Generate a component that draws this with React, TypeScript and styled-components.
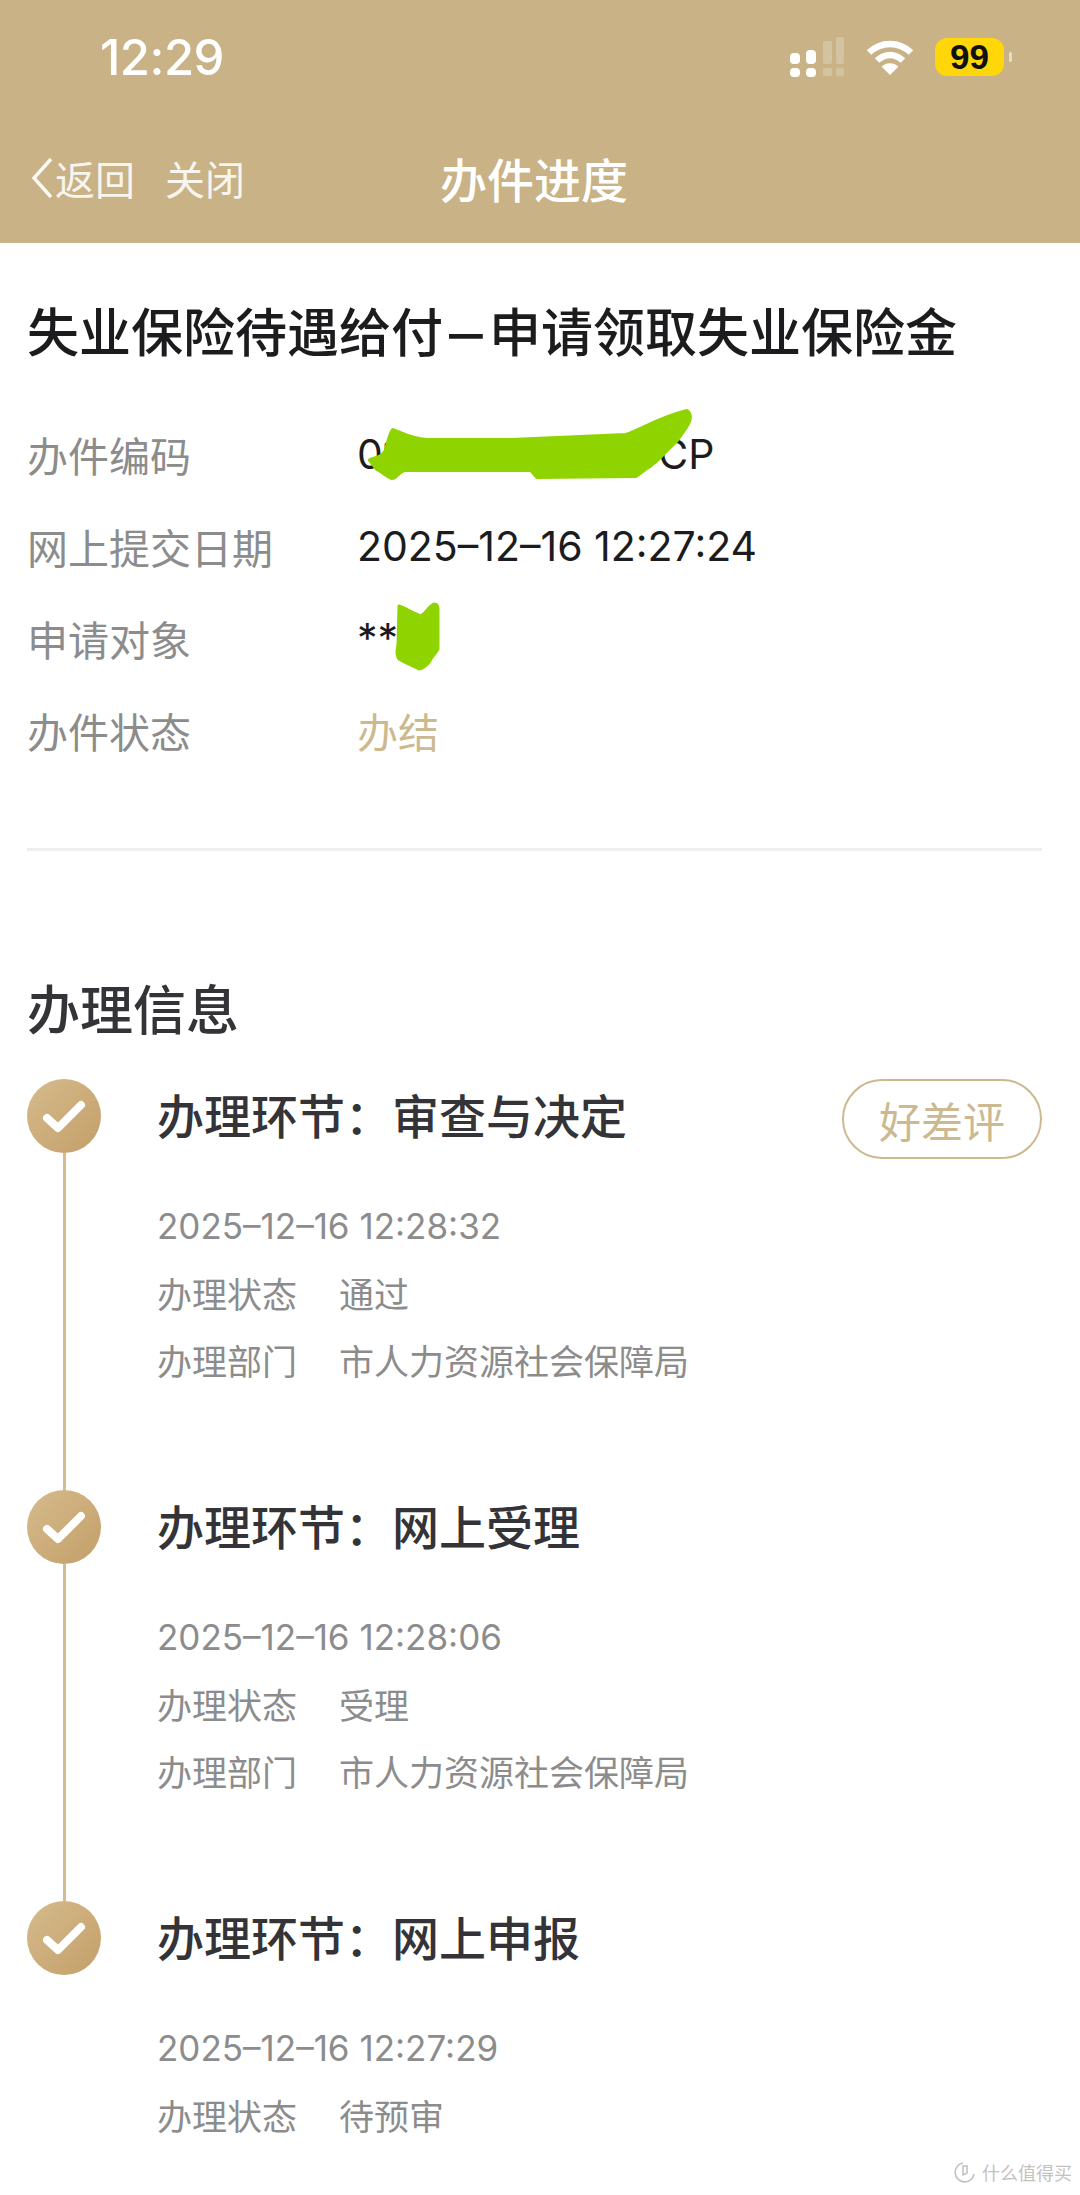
import React from 'react';
import styled, { createGlobalStyle } from 'styled-components';

const colors = {
    gold: '#c8b286',
    goldText: '#cdb98f',
    line: '#d6bd8e',
    label: '#8c8c8c',
    dark: '#1c1c1e',
    title: '#333338',
    scribble: '#8fd400',
};

const GlobalStyle = createGlobalStyle`
    html, body {
        background: #fff;
        margin: 0;
        padding: 0;
    }

    body {
        font-family: Inter, "Noto Sans CJK SC", sans-serif;
    }
`;

const Page = styled.div`
    background: #fff;
    height: 2195px;
    overflow: hidden;
    position: relative;
    width: 1080px;
`;

const Header = styled.header`
    background: ${colors.gold};
    color: #fff;
    height: 243px;
`;

const StatusBar = styled.div`
    align-items: center;
    display: flex;
    height: 114px;
    justify-content: space-between;
    padding: 0 68px 0 100px;
`;

const Time = styled.span`
    font-size: 49px;
    font-weight: 500;
    letter-spacing: -.5px;
`;

const StatusIcons = styled.div`
    align-items: center;
    display: flex;
`;

const Battery = styled.span`
    align-items: center;
    background: #ffd60a;
    border-radius: 12px;
    color: #111;
    display: flex;
    font-family: "Liberation Sans", sans-serif;
    font-size: 35px;
    font-weight: bold;
    height: 38px;
    justify-content: center;
    margin-left: 21px;
    width: 69px;
`;

const BatteryNub = styled.span`
    background: rgba(255, 255, 255, .55);
    border-radius: 2px;
    height: 10px;
    margin-left: 5px;
    width: 3px;
`;

const NavBar = styled.nav`
    align-items: center;
    display: flex;
    height: 127px;
    padding-left: 30px;
`;

const NavLeft = styled.div`
    align-items: center;
    display: flex;
    width: 410px;
`;

const NavLink = styled.span`
    color: rgba(255, 255, 255, .88);
    font-size: 40px;
    margin-left: ${props => props.$gap}px;
`;

const NavTitle = styled.h1`
    font-size: 47px;
    font-weight: 500;
    margin: 0;
`;

const Summary = styled.section`
    padding: 55px 38px 0 27px;
`;

const MainTitle = styled.h2`
    color: ${colors.dark};
    font-size: 52px;
    font-weight: 500;
    line-height: 72px;
    margin: 0 0 38px;
    white-space: nowrap;
`;

const TitleDash = styled.span`
    display: inline-block;
    margin: 0 10px;
    transform: scaleX(1.3);
`;

const InfoRow = styled.div`
    align-items: center;
    display: flex;
    font-size: 41px;
    height: 92px;
`;

const InfoLabel = styled.span`
    color: ${colors.label};
    width: 330px;
`;

const InfoValue = styled.span`
    color: ${props => props.$accent ? colors.goldText : colors.dark};
    position: relative;
`;

const Scribble = styled.svg`
    left: ${props => props.$left}px;
    position: absolute;
    top: ${props => props.$top}px;
`;

const Divider = styled.hr`
    background: #eeeeee;
    border: 0;
    height: 3px;
    margin: 72px 0 0;
`;

const Progress = styled.section`
    padding: 124px 38px 0 27px;
`;

const SectionTitle = styled.h2`
    color: ${colors.title};
    font-size: 53px;
    font-weight: 500;
    line-height: 72px;
    margin: 0 0 32px;
`;

const Step = styled.div`
    display: flex;
    height: 411px;
`;

const Marker = styled.div`
    align-items: center;
    display: flex;
    flex-direction: column;
    flex-shrink: 0;
    margin-right: 56px;
    width: 74px;
`;

const Dot = styled.div`
    align-items: center;
    background: linear-gradient(135deg, #d6bb8c, #c39f69);
    border-radius: 50%;
    display: flex;
    flex-shrink: 0;
    height: 74px;
    justify-content: center;
    width: 74px;
`;

const Rail = styled.div`
    background: ${colors.line};
    flex: 1;
    width: 3px;
`;

const StepBody = styled.div`
    flex: 1;
`;

const StepHead = styled.div`
    align-items: flex-start;
    display: flex;
    height: 80px;
    justify-content: space-between;
    margin-bottom: 33px;
`;

const StepTitle = styled.div`
    color: ${colors.title};
    font-size: 47px;
    font-weight: 500;
    line-height: 76px;
`;

const RateButton = styled.button`
    background: #fff;
    border: 2.5px solid ${colors.goldText};
    border-radius: 40px;
    color: ${colors.goldText};
    font-family: inherit;
    font-size: 42px;
    height: 80px;
    padding: 0;
    width: 200px;
`;

const StepLine = styled.div`
    align-items: center;
    color: ${colors.label};
    display: flex;
    font-size: 35px;
    height: 67px;
`;

const StepKey = styled.span`
    width: 182px;
`;

const Watermark = styled.div`
    align-items: center;
    bottom: 10px;
    color: #c2c2c2;
    display: flex;
    font-size: 18px;
    gap: 6px;
    position: absolute;
    right: 8px;
`;

const FULL_COLON = '\uFF1A';

const steps = [
    {
        name: '审查与决定',
        time: '2025–12–16 12:28:32',
        status: '通过',
        department: '市人力资源社会保障局',
        rate: true,
    },
    {
        name: '网上受理',
        time: '2025–12–16 12:28:06',
        status: '受理',
        department: '市人力资源社会保障局',
    },
    {
        name: '网上申报',
        time: '2025–12–16 12:27:29',
        status: '待预审',
    },
];

const SignalIcon = () => (
    <svg width="54" height="40" viewBox="0 0 54 40">
        <g fill="#fff">
            <rect x="0" y="16" width="10" height="11" rx="4" />
            <rect x="0" y="31" width="10" height="9" rx="4" />
            <rect x="16" y="13" width="10" height="14" rx="4" />
            <rect x="16" y="31" width="10" height="9" rx="4" />
        </g>
        <g fill="#fff" opacity=".22">
            <rect x="33" y="4" width="9" height="23" rx="2" />
            <rect x="33" y="31" width="9" height="8" rx="2" />
            <rect x="46" y="0" width="8" height="27" rx="2" />
            <rect x="46" y="31" width="8" height="8" rx="2" />
        </g>
    </svg>
);

const WifiIcon = () => (
    <svg width="48" height="36" viewBox="0 0 48 36" style={{ marginLeft: 22 }}>
        <g fill="none" stroke="#fff" strokeWidth="6.5">
            <path d="M3 13.5C15 2 33 2 45 13.5" />
            <path d="M11 21.5C19 14 29 14 37 21.5" />
        </g>
        <path d="M24 36L15.5 27.5C20.5 23 27.5 23 32.5 27.5Z" fill="#fff" />
    </svg>
);

const CheckIcon = () => (
    <svg width="44" height="36" viewBox="0 0 44 36">
        <path d="M5 20L16 30L39 7" fill="none" stroke="#fff" strokeWidth="8" strokeLinecap="round" strokeLinejoin="round" />
    </svg>
);

const BackChevron = () => (
    <svg width="24" height="44" viewBox="0 0 24 44">
        <path d="M21 3L4 22L21 41" fill="none" stroke="rgba(255,255,255,.9)" strokeWidth="3.5" />
    </svg>
);

const WatermarkIcon = () => (
    <svg width="22" height="22" viewBox="0 0 22 22">
        <path d="M9 2A9.5 9.5 0 1 0 20 13" fill="none" stroke="#c2c2c2" strokeWidth="1.6" />
        <path d="M9 5V14L13 12V5Z" fill="none" stroke="#c2c2c2" strokeWidth="1.6" />
    </svg>
);

const App = () => (
    <Page>
        <GlobalStyle />
        <Header>
            <StatusBar>
                <Time>12:29</Time>
                <StatusIcons>
                    <SignalIcon />
                    <WifiIcon />
                    <Battery>99</Battery>
                    <BatteryNub />
                </StatusIcons>
            </StatusBar>
            <NavBar>
                <NavLeft>
                    <BackChevron />
                    <NavLink $gap={1}>返回</NavLink>
                    <NavLink $gap={30}>关闭</NavLink>
                </NavLeft>
                <NavTitle>办件进度</NavTitle>
            </NavBar>
        </Header>
        <Summary>
            <MainTitle>失业保险待遇给付<TitleDash>–</TitleDash>申请领取失业保险金</MainTitle>
            <InfoRow>
                <InfoLabel>办件编码</InfoLabel>
                <InfoValue>
                    010000000000CP
                    <Scribble $left={4} $top={-21} width="340" height="80" viewBox="0 0 340 80">
                        <path
                            d="M9 52C14 50 20 50 24 44C27 36 29 25 32 22C40 25 50 31 66 32L150 32L265 27C280 22 300 9 326 3C330 6 330 12 325 19L316 32L294 54L275 68L176 69L170 62L43 62C37 64 35 70 31 70C25 68 22 64 16 61Z"
                            fill={colors.scribble}
                            stroke={colors.scribble}
                            strokeWidth="4"
                            strokeLinejoin="round"
                        />
                    </Scribble>
                </InfoValue>
            </InfoRow>
            <InfoRow>
                <InfoLabel>网上提交日期</InfoLabel>
                <InfoValue>2025–12–16 12:27:24</InfoValue>
            </InfoRow>
            <InfoRow>
                <InfoLabel>申请对象</InfoLabel>
                <InfoValue>
                    **
                    <Scribble $left={36} $top={-12} width="50" height="72" viewBox="0 0 50 72">
                        <path
                            d="M6 5C12 7 18 11 28 15C33 12 37 4 41 3C45 3 45 6 45 10L45 48C42 54 38 56 37 60C34 64 29 68 26 68C20 64 12 62 6 58C3 54 4 48 5 44Z"
                            fill={colors.scribble}
                            stroke={colors.scribble}
                            strokeWidth="3"
                            strokeLinejoin="round"
                        />
                    </Scribble>
                </InfoValue>
            </InfoRow>
            <InfoRow>
                <InfoLabel>办件状态</InfoLabel>
                <InfoValue $accent>办结</InfoValue>
            </InfoRow>
            <Divider />
        </Summary>
        <Progress>
            <SectionTitle>办理信息</SectionTitle>
            {steps.map((step, index) => (
                <Step key={step.name}>
                    <Marker>
                        <Dot><CheckIcon /></Dot>
                        {index < steps.length - 1 && <Rail />}
                    </Marker>
                    <StepBody>
                        <StepHead>
                            <StepTitle>办理环节{FULL_COLON}{step.name}</StepTitle>
                            {step.rate && <RateButton>好差评</RateButton>}
                        </StepHead>
                        <StepLine>{step.time}</StepLine>
                        <StepLine><StepKey>办理状态</StepKey>{step.status}</StepLine>
                        {step.department && (
                            <StepLine><StepKey>办理部门</StepKey>{step.department}</StepLine>
                        )}
                    </StepBody>
                </Step>
            ))}
        </Progress>
        <Watermark>
            <WatermarkIcon />
            什么值得买
        </Watermark>
    </Page>
);

export default App;
